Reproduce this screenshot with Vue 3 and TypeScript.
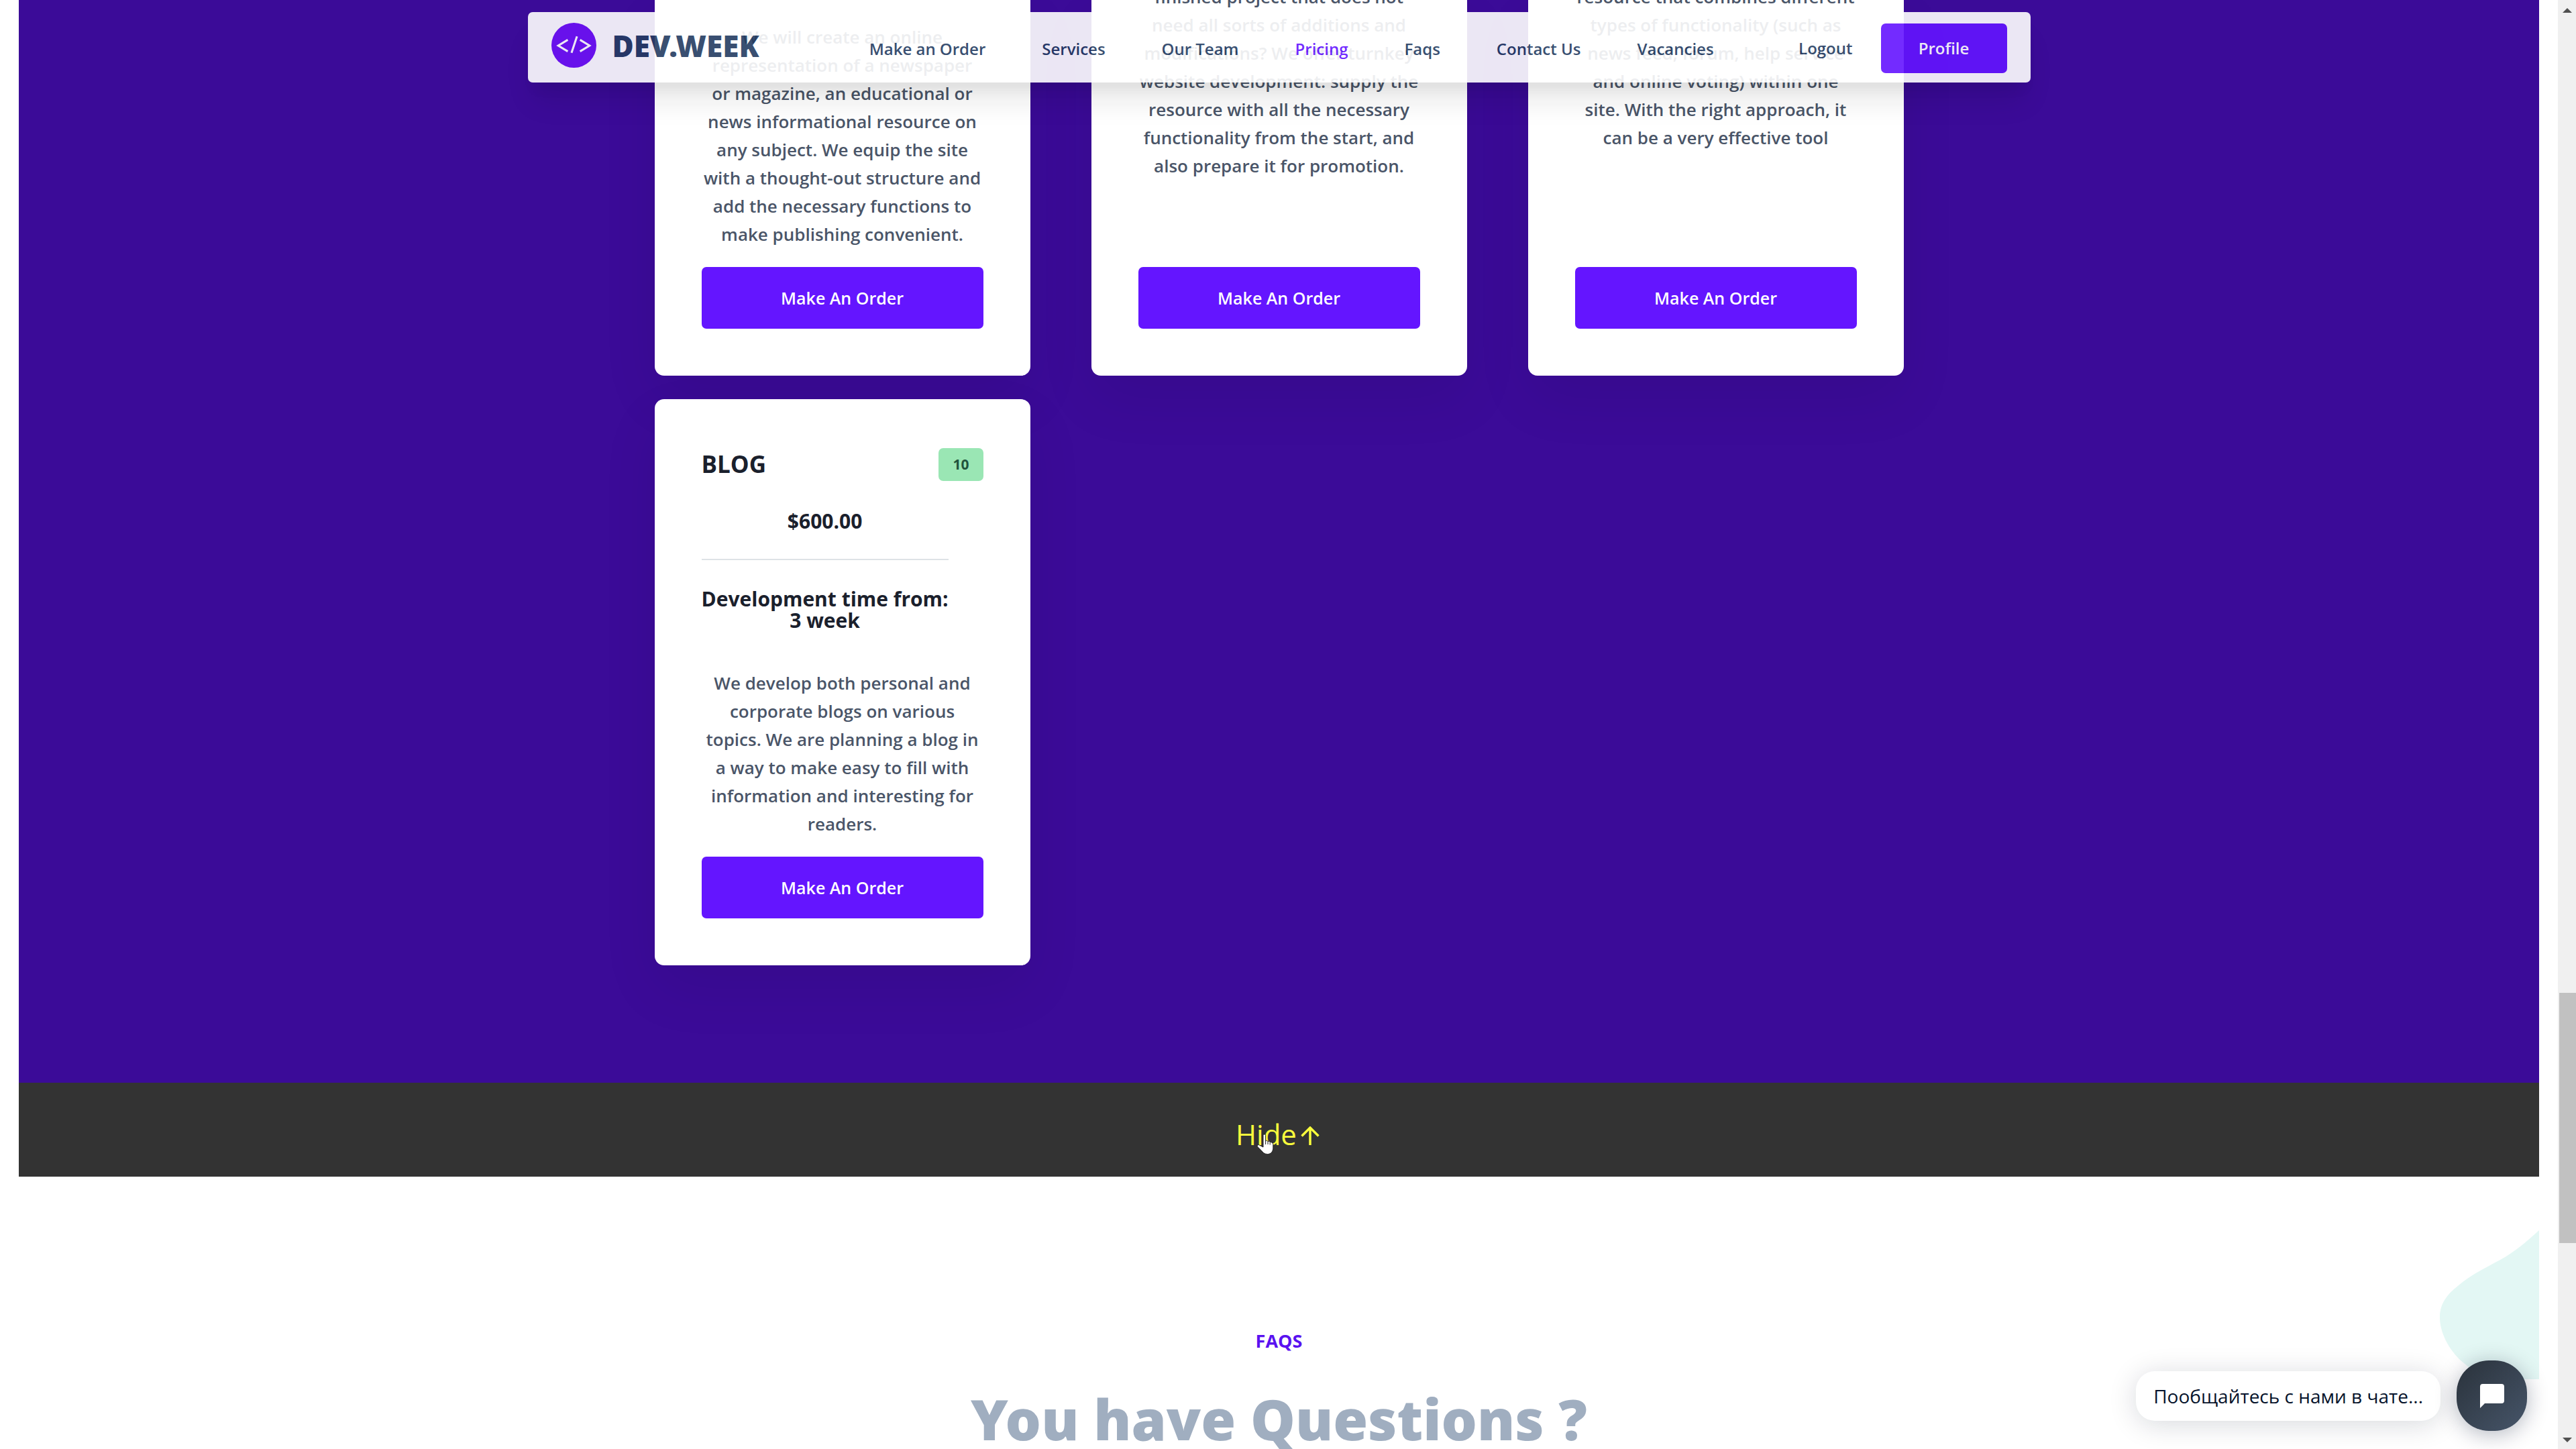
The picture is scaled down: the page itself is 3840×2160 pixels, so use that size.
<script setup lang="ts">
interface Card {
  lines: string[]
  size: 'full' | 'tall' | 'short'
}

const links: string[] = ['Make an Order', 'Services', 'Our Team', 'Pricing', 'Faqs', 'Contact Us', 'Vacancies']
const active = 'Pricing'

const cards: Card[] = [
  {
    size: 'full',
    lines: [
      'We will create an online',
      'representation of a newspaper',
      'or magazine, an educational or',
      'news informational resource on',
      'any subject. We equip the site',
      'with a thought-out structure and',
      'add the necessary functions to',
      'make publishing convenient.',
    ],
  },
  {
    size: 'tall',
    lines: [
      'finished project that does not',
      'need all sorts of additions and',
      'modifications? We offer turnkey',
      'website development: supply the',
      'resource with all the necessary',
      'functionality from the start, and',
      'also prepare it for promotion.',
    ],
  },
  {
    size: 'short',
    lines: [
      'resource that combines different',
      'types of functionality (such as',
      'news feed, forum, help service',
      'and online voting) within one',
      'site. With the right approach, it',
      'can be a very effective tool',
    ],
  },
]

const blogLines: string[] = [
  'We develop both personal and',
  'corporate blogs on various',
  'topics. We are planning a blog in',
  'a way to make easy to fill with',
  'information and interesting for',
  'readers.',
]
</script>

<template>
  <div class="page">
    <div class="content">
      <header class="nav">
        <a class="brand" href="#">
          <svg class="logo" viewBox="0 0 66 66" aria-hidden="true">
            <circle cx="33" cy="33" r="33" fill="#6d12f5" />
            <g fill="none" stroke="#fff" stroke-width="3">
              <path d="M24 25 L10 33.500 L24 42" />
              <path d="M42 25 L56 33.500 L42 42" />
              <path d="M37.500 20 L29.500 44" />
            </g>
          </svg>
          <span class="brand-name">DEV.WEEK</span>
        </a>
        <nav class="links">
          <a v-for="l in links" :key="l" href="#" :class="{ active: l === active }">{{ l }}</a>
        </nav>
        <div class="account">
          <a href="#">Logout</a>
          <button type="button" class="profile">Profile</button>
        </div>
      </header>

      <section class="pricing">
        <div class="grid">
          <article v-for="(c, i) in cards" :key="i" class="card clipped">
            <p class="desc" :class="c.size">
              <span v-for="line in c.lines" :key="line">{{ line }}</span>
            </p>
            <button type="button" class="order">Make An Order</button>
          </article>

          <article class="card">
            <div class="head">
              <h3>BLOG</h3>
              <span class="badge">10</span>
            </div>
            <div class="facts">
              <div class="price">$600.00</div>
              <div class="time"><span>Development time from:</span><span>3 week</span></div>
            </div>
            <p class="desc">
              <span v-for="line in blogLines" :key="line">{{ line }}</span>
            </p>
            <button type="button" class="order">Make An Order</button>
          </article>
        </div>
      </section>

      <button type="button" class="hide">
        <span class="hide-label">
          Hide
          <svg class="pointer" viewBox="0 0 26 32" aria-hidden="true">
            <path
              d="M10 2.500c0-2 3.600-2 3.600 0v8.500c.8-1.200 3.200-.8 3.400.8.900-1 3-.7 3.200.9 1-.8 2.800-.4 3 1.200.8 0 1.600.6 1.600 1.800v5.500c0 5-3.200 9.300-8.300 9.300-4.800 0-7-2.600-9.200-5.500L1.700 19.500c-1.300-1.900.6-3.600 2.700-2.500L10 20z"
              fill="#fff"
              stroke="#222"
              stroke-width="1"
            />
            <path d="M13.600 11v5M17 12v4M20.200 13v3.500" stroke="#222" stroke-width="1" fill="none" />
          </svg>
        </span>
        <svg class="up" viewBox="0 0 28 28" aria-hidden="true">
          <path d="M14 28V2M1.500 14.500 14 2l12.500 12.500" fill="none" stroke="#f8fc3c" stroke-width="3.500" />
        </svg>
      </button>

      <section class="faqs">
        <svg class="blob" viewBox="0 0 148 222" aria-hidden="true">
          <path d="M148 0C128 18 112 32 90 44C64 58 44 68 28 82C10 96 0 110 0 130C0 156 18 184 36 198C52 212 66 222 90 222H148Z" fill="#e3f7f4" />
        </svg>
        <h5>FAQS</h5>
        <h2>You have Questions ?</h2>
      </section>

      <aside class="chat">
        <div class="bubble">Пообщайтесь с нами в чате...</div>
        <button type="button" class="chat-button" aria-label="Chat">
          <svg viewBox="0 0 36 36" aria-hidden="true">
            <path d="M4 0H32Q36 0 36 4V25Q36 29 32 29H7L0 36V4Q0 0 4 0Z" fill="#fff" />
          </svg>
        </button>
      </aside>
    </div>

    <div class="scrollbar" aria-hidden="true">
      <svg viewBox="0 0 14 7"><path d="M7 0 14 7H0Z" fill="#505050" /></svg>
      <div class="track"><div class="thumb"></div></div>
      <svg viewBox="0 0 14 7"><path d="M7 7 14 0H0Z" fill="#505050" /></svg>
    </div>
  </div>
</template>

<style>
body {
  background: #fff;
  overflow: hidden;
}
</style>

<style scoped>
* {
  box-sizing: border-box;
}
.page {
  display: flex;
  height: 100vh;
  overflow: hidden;
  font-family: 'Open Sans', 'Noto Sans', sans-serif;
  color: #1a202c;
}
button {
  font-family: inherit;
  border: 0;
  padding: 0;
  cursor: pointer;
}
a {
  color: inherit;
  text-decoration: none;
}
h2,
h3,
h5,
p {
  margin: 0;
}
.content {
  position: relative;
  flex: 1;
  min-width: 0;
  padding: 0 28px;
  overflow: hidden;
}

/* Floating navigation */
.nav {
  position: absolute;
  z-index: 2;
  top: 18px;
  left: 0;
  right: 0;
  margin: 0 auto;
  width: calc(100% - 56px);
  max-width: 2240px;
  height: 105px;
  padding: 0 35px;
  display: flex;
  align-items: center;
  border-radius: 7px;
  background: #fff;
  opacity: 0.9;
  box-shadow: 0 35px 44px -9px rgba(0, 0, 0, 0.1), 0 18px 18px -9px rgba(0, 0, 0, 0.06);
  font-size: 24px;
  font-weight: 600;
  color: #243c62;
}
.brand {
  display: flex;
  align-items: center;
  gap: 24px;
  padding-bottom: 6px;
}
.logo {
  width: 67px;
  height: 67px;
}
.brand-name {
  font-family: 'Noto Sans', sans-serif;
  font-size: 44px;
  font-weight: 900;
  line-height: 56px;
}
.links {
  display: flex;
  gap: 84px;
  margin-left: 164px;
  padding-top: 4px;
}
.links .active {
  color: #6415ff;
}
.account {
  display: flex;
  align-items: center;
  gap: 42px;
  margin-left: auto;
  padding-top: 2px;
}
.profile {
  width: 188px;
  height: 74px;
  border-radius: 7px;
  background: #6415ff;
  color: #fff;
  font-size: 24px;
  font-weight: 600;
}

/* Pricing cards */
.pricing {
  background: #3b0b98;
  padding-bottom: 175px;
}
.grid {
  display: grid;
  grid-template-columns: repeat(3, 560px);
  gap: 35px 91px;
  justify-content: center;
}
.card {
  display: flex;
  flex-direction: column;
  padding: 70px;
  border-radius: 14px;
  background: #fff;
  box-shadow: 0 35px 88px rgba(0, 0, 0, 0.07);
}
.clipped {
  height: 560px;
  padding-top: 0;
  justify-content: flex-end;
  border-radius: 0 0 14px 14px;
  overflow: hidden;
}
.head {
  display: flex;
  align-items: center;
  justify-content: space-between;
  height: 54px;
}
.head h3 {
  font-size: 35px;
  font-weight: 700;
  line-height: 52px;
}
.badge {
  padding: 0 21px;
  border-radius: 7px;
  background: #9ae6b4;
  color: #22543d;
  font-size: 21px;
  font-weight: 700;
  line-height: 49px;
}
.facts {
  align-self: flex-start;
  margin: 42px 0 56px;
  font-size: 30px;
  font-weight: 700;
  line-height: 32px;
  text-align: center;
}
.price {
  padding-bottom: 40px;
  border-bottom: 2px solid #dee2e6;
}
.time {
  display: flex;
  flex-direction: column;
  padding-top: 42px;
}
.desc {
  flex: none;
  display: flex;
  flex-direction: column;
  align-items: center;
  margin-bottom: 28px;
  color: #4a5568;
  font-size: 26px;
  font-weight: 600;
  line-height: 42px;
  white-space: nowrap;
}
.tall {
  padding-bottom: 102px;
}
.short {
  padding-bottom: 144px;
}
.order {
  flex: none;
  height: 92px;
  border-radius: 7px;
  background: #6415ff;
  color: #fff;
  font-size: 25px;
  font-weight: 600;
}

/* Collapse bar */
.hide {
  display: flex;
  align-items: center;
  justify-content: center;
  gap: 6px;
  width: 100%;
  height: 140px;
  padding: 12px 4px 0 0;
  background: #333;
  color: #f8fc3c;
  font-size: 42px;
  font-weight: 400;
}
.hide-label {
  position: relative;
}
.pointer {
  position: absolute;
  left: 31px;
  top: 28px;
  width: 26px;
  height: 32px;
}
.up {
  width: 28px;
  height: 28px;
  margin-top: 6px;
}

/* FAQ heading */
.faqs {
  position: relative;
  padding-top: 224px;
  text-align: center;
}
.blob {
  position: absolute;
  top: 80px;
  right: 0;
  width: 148px;
  height: 222px;
}
.faqs h5 {
  color: #5a12f0;
  font-size: 27px;
  font-weight: 700;
  line-height: 42px;
}
.faqs h2 {
  margin-top: 42px;
  color: #a0aec0;
  font-family: 'Noto Sans', sans-serif;
  font-size: 84px;
  font-weight: 900;
  line-height: 105px;
  white-space: nowrap;
}

/* Chat widget */
.chat {
  position: absolute;
  right: 46px;
  bottom: 27px;
  display: flex;
  align-items: center;
  gap: 24px;
}
.bubble {
  padding: 0 26px;
  border-radius: 28px;
  background: #fff;
  box-shadow: 0 5px 42px rgba(0, 18, 46, 0.16);
  color: #06132b;
  font-size: 28px;
  font-weight: 400;
  line-height: 74px;
  white-space: nowrap;
}
.chat-button {
  display: flex;
  align-items: center;
  justify-content: center;
  width: 105px;
  height: 105px;
  border-radius: 48px;
  background: linear-gradient(135deg, #2a323b, #465569);
  box-shadow: 0 5px 32px rgba(0, 18, 46, 0.3);
}
.chat-button svg {
  width: 36px;
  height: 36px;
}

/* Window scrollbar */
.scrollbar {
  display: flex;
  flex-direction: column;
  align-items: center;
  width: 27px;
  padding: 12px 0 10px;
  background: #f0f0f0;
}
.scrollbar svg {
  width: 14px;
  height: 7px;
}
.track {
  flex: 1;
  width: 100%;
  padding-left: 2px;
}
.thumb {
  height: 373px;
  margin-top: 1461px;
  background: #c1c1c1;
}
</style>
